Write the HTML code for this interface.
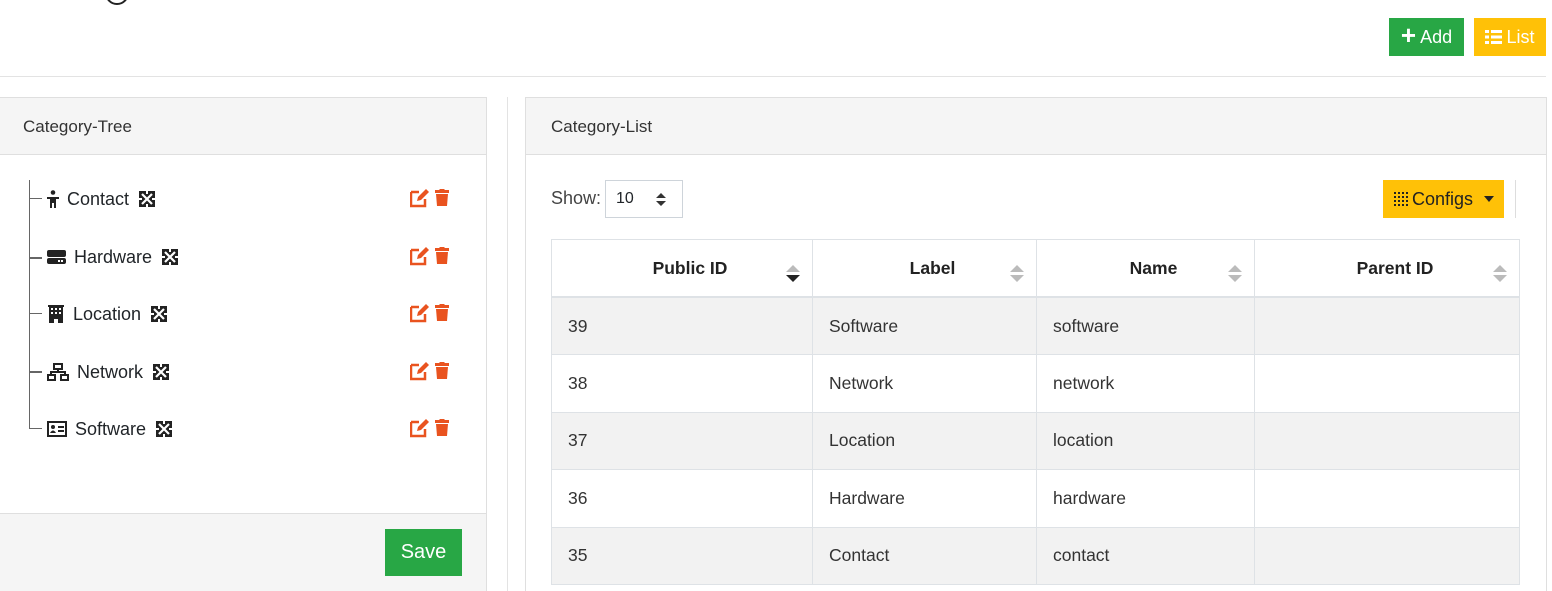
<!DOCTYPE html>
<html><head><meta charset="utf-8"><style>
*{box-sizing:border-box;margin:0;padding:0}
html,body{width:1552px;height:591px;overflow:hidden}
body{background:#fff;font-family:"Liberation Sans",sans-serif;color:#212529;font-size:17px;position:relative}
.abs{position:absolute}
.btn{position:absolute;height:38px;color:#fff;font-size:18px;display:flex;align-items:center;justify-content:center;gap:4px}
.card{position:absolute;border:1px solid #dfdfdf}
.hd{height:57px;background:#f5f5f5;border-bottom:1px solid #dfdfdf;padding:0 0 0 25px;line-height:57px;font-size:17px;color:#333}
.tree .row{position:absolute;left:0;width:470px;height:30px;display:flex;align-items:center;font-size:18px}
.tree .lbl{margin-left:8px;margin-right:10px}
.hl{position:absolute;left:30px;width:12px;border-top:1px solid #666}
table{position:absolute;left:551px;top:239px;width:969px;border-collapse:collapse;font-size:17.5px}
td,th{border:1px solid #dee2e6;height:57.5px;padding-left:16px;text-align:left;font-weight:normal;color:#333}
th{font-weight:bold;text-align:center;color:#222;position:relative;border-bottom:2px solid #dee2e6}
tbody tr:nth-child(odd) td{background:#f2f2f2}
.sort{position:absolute;right:12px;top:25px}
</style></head><body>
<svg class="abs" style="left:104px;top:-18px" width="26" height="26"><circle cx="13" cy="11" r="11" fill="none" stroke="#222" stroke-width="2"/></svg>
<div class="btn" style="left:1389px;top:18px;width:75px;background:#28a745"><span style="font-size:26px;font-weight:bold;margin-top:-3px">+</span>Add</div>
<div class="btn" style="left:1474px;top:18px;width:72px;background:#ffc107">
<svg width="17" height="14"><rect x="0" y="0" width="4" height="3" fill="#fff"/><rect x="6" y="0" width="11" height="3" fill="#fff"/><rect x="0" y="5.5" width="4" height="3" fill="#fff"/><rect x="6" y="5.5" width="11" height="3" fill="#fff"/><rect x="0" y="11" width="4" height="3" fill="#fff"/><rect x="6" y="11" width="11" height="3" fill="#fff"/></svg>List</div>
<div class="abs" style="left:0;top:76px;width:1546px;border-top:1px solid #e3e3e3"></div>

<div class="card" style="left:-1px;top:97px;width:488px;height:500px">
<div class="hd" style="padding-left:23px">Category-Tree</div>
<div class="abs" style="left:0;top:415px;width:486px;height:90px;background:#f5f5f5;border-top:1px solid #dfdfdf"></div>
<div class="abs" style="left:385px;top:431px;width:77px;height:47px;background:#28a745;color:#fff;font-size:20px;line-height:47px;text-align:center">Save</div>
</div>
<div class="abs" style="left:507px;top:97px;height:494px;border-left:1px solid #e3e3e3"></div>

<svg width="0" height="0" style="position:absolute"><defs>
<g id="mv"><rect width="16" height="16" fill="#222"/><path d="M3 3l10 10M13 3L3 13" stroke="#fff" stroke-width="2.2"/><path d="M8 0v3M8 13v3M0 8h3M13 8h3" stroke="#fff" stroke-width="2"/></g>
<g id="a"><path d="M1 4h8M1 4v14h14v-7" fill="none" stroke="#e9531f" stroke-width="2.5"/><path d="M7 13l1-4 8-8 3 3-8 8z" fill="#e9531f"/><path d="M25 2h4l1-1h4l1 1h4v3H25z M26 6h12l-1 12H27z" fill="#e9531f"/></g>
</defs></svg>

<div class="tree">
<div class="abs" style="left:29px;top:180px;height:249px;border-left:1px solid #666"></div>
<div class="hl" style="top:198px"></div><div class="hl" style="top:257px;border-top-width:2px"></div><div class="hl" style="top:313px"></div><div class="hl" style="top:371px;border-top-width:2px"></div><div class="hl" style="top:428px"></div>
</div>
<div class="tree">
<div class="row" style="top:184px;left:47px"><svg width="12" height="18" viewBox="0 0 12 18"><circle cx="6" cy="2.5" r="2.3" fill="#222"/><path d="M0 7h12v2H9v9H7v-5H5v5H3V9H0z" fill="#222"/></svg><span class="lbl">Contact</span><svg width="16" height="16"><use href="#mv"/></svg></div>
<div class="row" style="top:242px;left:47px"><svg width="19" height="16" viewBox="0 0 19 16"><rect x="0" y="1" width="19" height="7" rx="2" fill="#222"/><rect x="0" y="9" width="19" height="6" rx="2" fill="#222"/><rect x="11" y="11" width="2" height="2" fill="#fff"/><rect x="14" y="11" width="2" height="2" fill="#fff"/></svg><span class="lbl">Hardware</span><svg width="16" height="16"><use href="#mv"/></svg></div>
<div class="row" style="top:299px;left:47px"><svg width="18" height="18" viewBox="0 0 18 18"><path d="M1 0h16v2h-1v16h-5v-4H7v4H2V2H1z" fill="#222"/><g fill="#fff"><rect x="4" y="3" width="2" height="2"/><rect x="8" y="3" width="2" height="2"/><rect x="12" y="3" width="2" height="2"/><rect x="4" y="7" width="2" height="2"/><rect x="8" y="7" width="2" height="2"/><rect x="12" y="7" width="2" height="2"/></g></svg><span class="lbl">Location</span><svg width="16" height="16"><use href="#mv"/></svg></div>
<div class="row" style="top:357px;left:47px"><svg width="22" height="18" viewBox="0 0 22 18"><g fill="none" stroke="#222" stroke-width="2"><rect x="7" y="1" width="8" height="5"/><rect x="1" y="12" width="7" height="5"/><rect x="14" y="12" width="7" height="5"/><path d="M11 6v3M4 12V9h14v3"/></g></svg><span class="lbl">Network</span><svg width="16" height="16"><use href="#mv"/></svg></div>
<div class="row" style="top:414px;left:47px"><svg width="20" height="16" viewBox="0 0 20 16"><rect x="1" y="1" width="18" height="14" fill="none" stroke="#222" stroke-width="2"/><circle cx="6" cy="6" r="2" fill="#222"/><path d="M3 12q3-5 6 0z" fill="#222"/><rect x="11" y="5" width="6" height="2" fill="#222"/><rect x="11" y="9" width="6" height="2" fill="#222"/></svg><span class="lbl">Software</span><svg width="16" height="16"><use href="#mv"/></svg></div>
</div>
<svg class="abs" style="left:410px;top:188px" width="45" height="260">
<use href="#a" y="0"/><use href="#a" y="58"/><use href="#a" y="115"/><use href="#a" y="173"/><use href="#a" y="230"/>
</svg>

<div class="card" style="left:525px;top:97px;width:1022px;height:500px">
<div class="hd">Category-List</div>
</div>
<div class="abs" style="left:551px;top:188px;color:#444;font-size:18px">Show:</div>
<div class="abs" style="left:605px;top:180px;width:78px;height:38px;border:1px solid #ced4da;font-size:16px;line-height:36px;padding-left:10px">10
<svg class="abs" style="left:50px;top:12px" width="10" height="13"><path d="M0 5l5-5 5 5zM0 8l5 5 5-5z" fill="#333"/></svg></div>
<div class="abs" style="left:1383px;top:180px;width:121px;height:38px;background:#ffc107;display:flex;align-items:center;padding-left:11px;gap:3px;font-size:18px;color:#222">
<svg width="15" height="15">
<g fill="#222"><rect x="0" y="0" width="2" height="2"/><rect x="4" y="0" width="2" height="2"/><rect x="8" y="0" width="2" height="2"/><rect x="12" y="0" width="2" height="2"/><rect x="0" y="4" width="2" height="2"/><rect x="4" y="4" width="2" height="2"/><rect x="8" y="4" width="2" height="2"/><rect x="12" y="4" width="2" height="2"/><rect x="0" y="8" width="2" height="2"/><rect x="4" y="8" width="2" height="2"/><rect x="8" y="8" width="2" height="2"/><rect x="12" y="8" width="2" height="2"/><rect x="0" y="12" width="2" height="2"/><rect x="4" y="12" width="2" height="2"/><rect x="8" y="12" width="2" height="2"/><rect x="12" y="12" width="2" height="2"/></g></svg>Configs<svg style="margin-left:8px" width="10" height="6"><path d="M0 0h10L5 6z" fill="#222"/></svg></div>
<div class="abs" style="left:1515px;top:180px;height:38px;border-left:1px solid #ddd"></div>

<table>
<thead><tr><th style="width:261px">Public ID<svg class="sort" width="14" height="17"><path d="M0 7l7-7 7 7z" fill="#bbb"/><path d="M0 10l7 7 7-7z" fill="#222"/></svg></th><th style="width:224px">Label<svg class="sort" width="14" height="17"><path d="M0 7l7-7 7 7zM0 10l7 7 7-7z" fill="#bbb"/></svg></th><th style="width:218px">Name<svg class="sort" width="14" height="17"><path d="M0 7l7-7 7 7zM0 10l7 7 7-7z" fill="#bbb"/></svg></th><th>Parent ID<svg class="sort" width="14" height="17"><path d="M0 7l7-7 7 7zM0 10l7 7 7-7z" fill="#bbb"/></svg></th></tr></thead>
<tbody>
<tr><td>39</td><td>Software</td><td>software</td><td></td></tr>
<tr><td>38</td><td>Network</td><td>network</td><td></td></tr>
<tr><td>37</td><td>Location</td><td>location</td><td></td></tr>
<tr><td>36</td><td>Hardware</td><td>hardware</td><td></td></tr>
<tr><td>35</td><td>Contact</td><td>contact</td><td></td></tr>
</tbody>
</table>
</body></html>
